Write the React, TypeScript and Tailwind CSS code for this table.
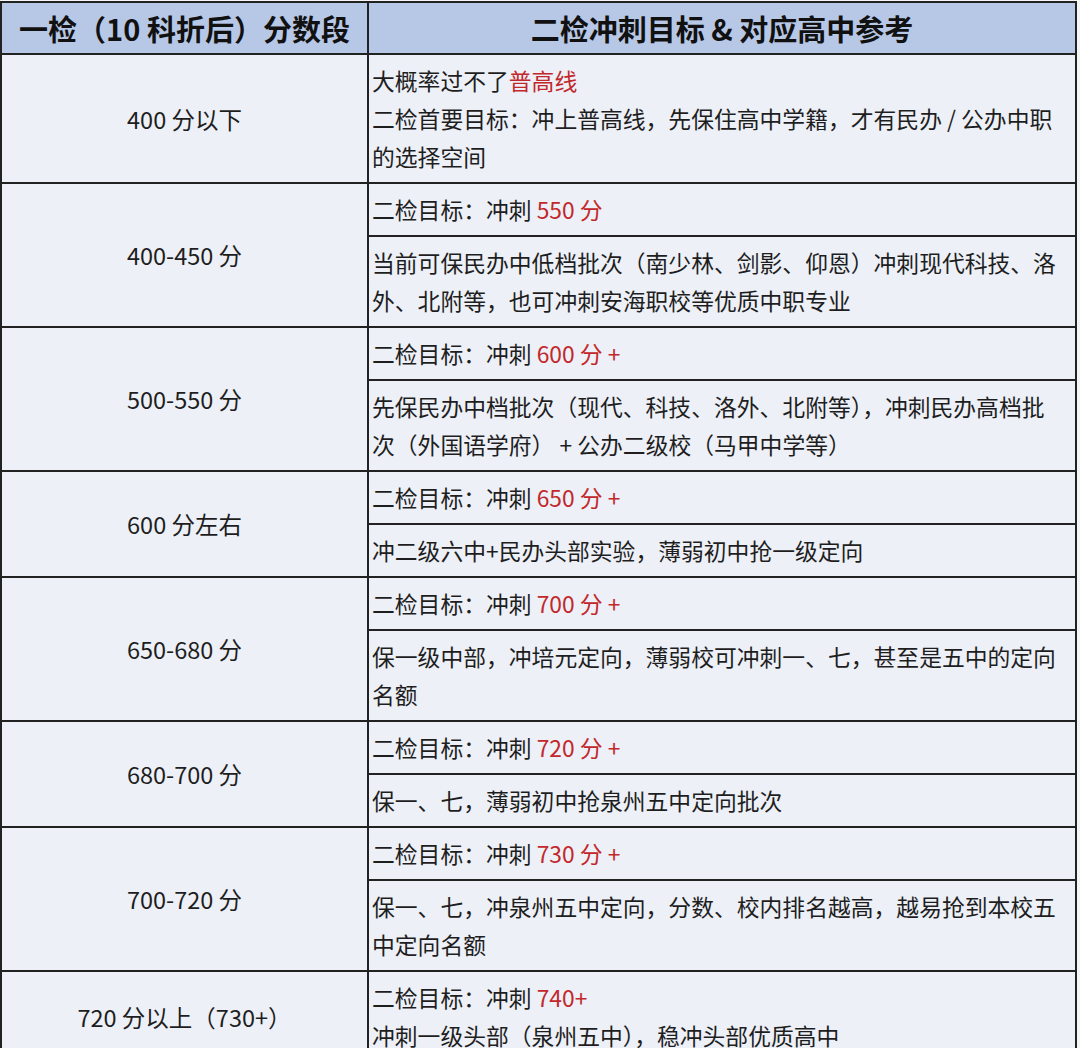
import React from "react";

type Row = {
  label: string;
  cells: React.ReactNode[];
};

const Red = ({ children }: { children: React.ReactNode }) => (
  <span className="text-[#c2282b]">{children}</span>
);

const goal = (v: string) => (
  <>
    二检目标：冲刺 <Red>{v}</Red>
  </>
);

const rows: Row[] = [
  {
    label: "400 分以下",
    cells: [
      <>
        <div>
          大概率过不了<Red>普高线</Red>
        </div>
        <div>二检首要目标：冲上普高线，先保住高中学籍，才有民办 / 公办中职的选择空间</div>
      </>,
    ],
  },
  {
    label: "400-450 分",
    cells: [
      goal("550 分"),
      "当前可保民办中低档批次（南少林、剑影、仰恩）冲刺现代科技、洛外、北附等，也可冲刺安海职校等优质中职专业",
    ],
  },
  {
    label: "500-550 分",
    cells: [
      goal("600 分 +"),
      "先保民办中档批次（现代、科技、洛外、北附等），冲刺民办高档批次（外国语学府） + 公办二级校（马甲中学等）",
    ],
  },
  {
    label: "600 分左右",
    cells: [goal("650 分 +"), "冲二级六中+民办头部实验，薄弱初中抢一级定向"],
  },
  {
    label: "650-680 分",
    cells: [
      goal("700 分 +"),
      "保一级中部，冲培元定向，薄弱校可冲刺一、七，甚至是五中的定向名额",
    ],
  },
  {
    label: "680-700 分",
    cells: [goal("720 分 +"), "保一、七，薄弱初中抢泉州五中定向批次"],
  },
  {
    label: "700-720 分",
    cells: [
      goal("730 分 +"),
      "保一、七，冲泉州五中定向，分数、校内排名越高，越易抢到本校五中定向名额",
    ],
  },
  {
    label: "720 分以上（730+）",
    cells: [
      <>
        <div>{goal("740+")}</div>
        <div>冲刺一级头部（泉州五中），稳冲头部优质高中</div>
      </>,
    ],
  },
];

export default function App() {
  return (
    <div className="min-h-screen bg-[#f4f5f7] pt-[1px] overflow-hidden font-['Noto_Sans_CJK_SC','Noto_Sans',sans-serif]">
      <table className="w-[1077px] table-fixed border-collapse text-[#1e1e1e]">
        <colgroup>
          <col className="w-[367px]" />
          <col />
        </colgroup>
        <thead>
          <tr className="bg-[#b7c7e6]">
            <th className="border-2 border-[#222] h-[52px] text-[29px] font-bold leading-[48px] text-center text-[#111]">
              一检（10 科折后）分数段
            </th>
            <th className="border-2 border-[#222] h-[52px] text-[29px] font-bold leading-[48px] text-center text-[#111]">
              二检冲刺目标 &amp; 对应高中参考
            </th>
          </tr>
        </thead>
        <tbody className="bg-[#edf0f7] text-[22.8px] leading-[38px]">
          {rows.map((r) =>
            r.cells.map((c, i) => (
              <tr key={r.label + i}>
                {i === 0 && (
                  <td
                    rowSpan={r.cells.length}
                    className="border-2 border-[#222] text-center align-middle text-[23.5px]"
                  >
                    {r.label}
                  </td>
                )}
                <td className="border-2 border-[#222] pl-[3px] pr-[14px] py-[6.5px] align-top">{c}</td>
              </tr>
            ))
          )}
        </tbody>
      </table>
    </div>
  );
}
